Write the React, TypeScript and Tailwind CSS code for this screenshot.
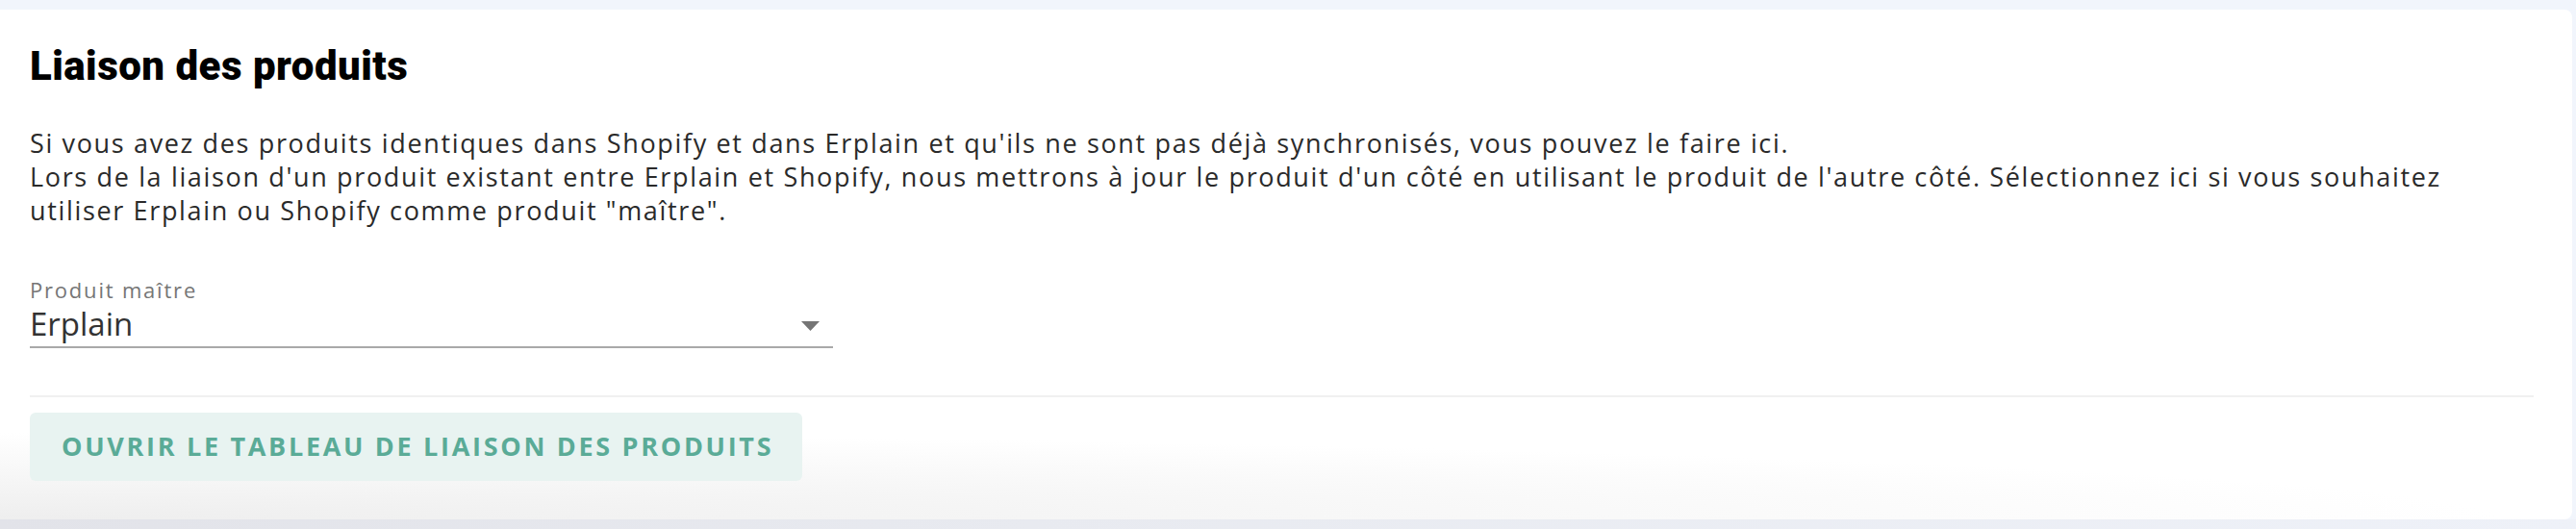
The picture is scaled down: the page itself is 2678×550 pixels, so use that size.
import React from 'react';

const lines = [
  "Si vous avez des produits identiques dans Shopify et dans Erplain et qu'ils ne sont pas déjà synchronisés, vous pouvez le faire ici.",
  "Lors de la liaison d'un produit existant entre Erplain et Shopify, nous mettrons à jour le produit d'un côté en utilisant le produit de l'autre côté. Sélectionnez ici si vous souhaitez",
  'utiliser Erplain ou Shopify comme produit "maître".',
];

export default function App() {
  return (
    <div className="w-[2678px] h-[550px] bg-[#f1f5fc] flex flex-col overflow-hidden">
      <div className="h-[10px] shrink-0" />
      <div className="mr-[4px] h-[530px] shrink-0 rounded-r-lg bg-[radial-gradient(2600px_90px_at_0%_100%,#eeeeee,#ffffff)] pl-[31px] pr-[40px] pt-[35px] flex flex-col">
        <h2 className="font-['Roboto',sans-serif] font-black text-[42px] leading-[48px] tracking-[0.5px] text-black">
          Liaison des produits
        </h2>

        <div className="mt-[38px] font-['Open_Sans',sans-serif] text-[27px] leading-[35px] tracking-[1.65px] text-[#2a2a2a]">
          {lines.map((l) => (
            <div key={l} className="whitespace-nowrap">{l}</div>
          ))}
        </div>

        <div className="mt-[53px] w-[835px] font-['Open_Sans',sans-serif]">
          <div className="text-[22px] leading-[24px] tracking-[1.8px] text-[#767676]">Produit maître</div>
          <div className="mt-[4px] flex items-center justify-between border-b-2 border-[#a9a9a9] pb-[3px]">
            <span className="text-[33px] leading-[40px] text-[#333333]">Erplain</span>
            <svg width="19" height="10" viewBox="0 0 19 10" className="mr-[14px] mt-[4px]">
              <path d="M0 0 L19 0 L9.5 10 Z" fill="#757575" />
            </svg>
          </div>
        </div>

        <div className="mt-[49px] h-[2px] bg-[#f0f0f0]" />

        <div className="mt-[16px]">
          <button className="h-[71px] w-[803px] rounded-md bg-[#e8f3f1] px-[33px] font-['Open_Sans',sans-serif] font-bold text-[27px] uppercase tracking-[2.7px] text-[#5aab97] whitespace-nowrap">
            Ouvrir le tableau de liaison des produits
          </button>
        </div>
      </div>
      <div className="h-[10px] shrink-0 bg-[linear-gradient(to_right,#e2e3e9,#e8eaf0_40%,#eef1f8)]" />
    </div>
  );
}
